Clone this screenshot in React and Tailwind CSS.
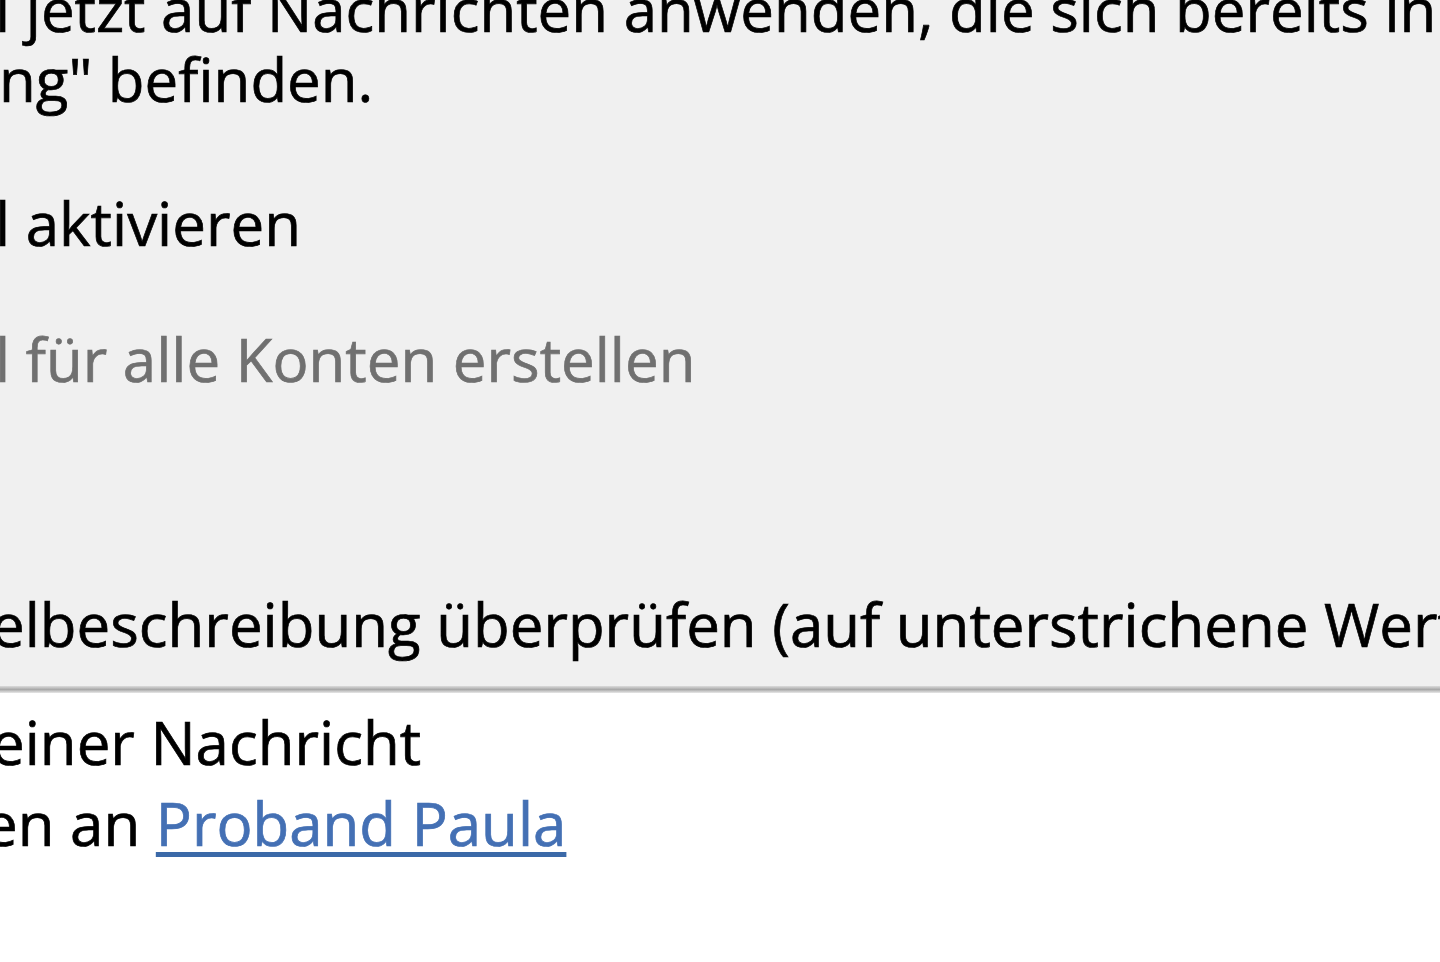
import React from "react";

// Zoomed view of a rules wizard dialog (German Outlook)
const Line = ({ className = "", children }) => (
  <div className={`whitespace-nowrap leading-[70px] ${className}`}>{children}</div>
);

export default function App() {
  return (
    <div
      className="w-[1440px] h-[962px] overflow-hidden flex flex-col text-[60px] text-black [-webkit-text-stroke:0.7px_currentColor]"
      style={{ fontFamily: '"Open Sans", "Noto Sans", sans-serif' }}
    >
      <div className="h-[686px] bg-[#f0f0f0] overflow-hidden flex flex-col">
        <div className="-mt-[26px]">
          <Line className="-ml-[5px]">l jetzt auf Nachrichten anwenden, die sich bereits in</Line>
          <Line className="-ml-[1px]">ng" befinden.</Line>
        </div>
        <Line className="mt-[74px] -ml-[5px]">l aktivieren</Line>
        <Line className="mt-[66px] -ml-[5px] text-[#707070]">l für alle Konten erstellen</Line>
        <Line className="mt-[195px] -ml-[9px]">elbeschreibung überprüfen (auf unterstrichene Werte klicken)</Line>
      </div>
      <div className="h-[7px] bg-gradient-to-b from-[#dcdcdc] via-[#a9a9a9] to-[#e8e8e8]" />
      <div className="flex-1 bg-white overflow-hidden">
        <Line className="mt-[9px] -ml-[9px] leading-[81px]">einer Nachricht</Line>
        <Line className="-ml-[16px] leading-[81px]">
          en an{" "}
          <span className="text-[#4470b4] underline decoration-[#3b69a8] decoration-[5px] underline-offset-[6px]">
            Proband Paula
          </span>
        </Line>
      </div>
    </div>
  );
}
